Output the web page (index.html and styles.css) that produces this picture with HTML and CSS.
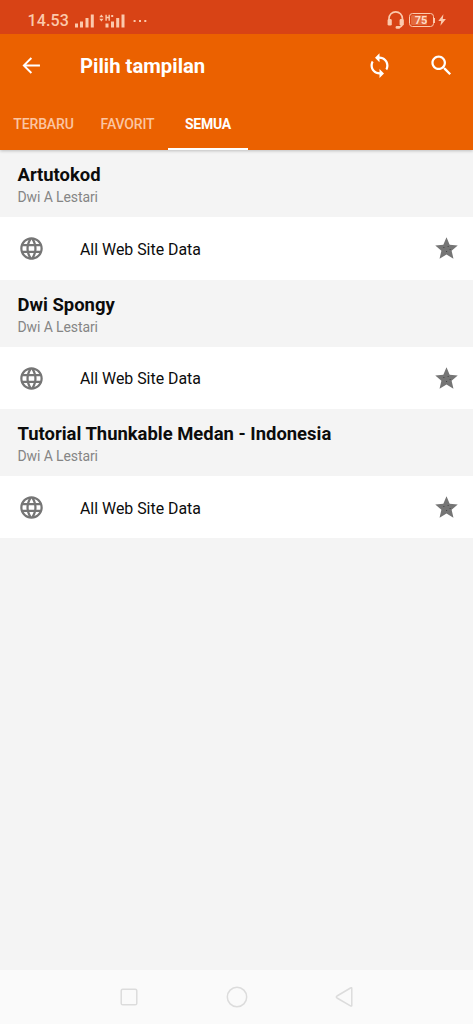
FILE: index.html
```html
<!DOCTYPE html>
<html lang="id">
<head>
<meta charset="utf-8">
<title>Pilih tampilan</title>
<link rel="stylesheet" href="styles.css">
</head>
<body>
<svg class="defs" width="0" height="0">
  <symbol id="globe" viewBox="0 0 24 24"><path d="M11.99 2C6.47 2 2 6.48 2 12s4.47 10 9.99 10C17.52 22 22 17.52 22 12S17.52 2 11.99 2zm6.93 6h-2.95c-.32-1.25-.78-2.45-1.38-3.56 1.84.63 3.37 1.91 4.33 3.56zM12 4.04c.83 1.2 1.48 2.53 1.91 3.96h-3.82c.43-1.43 1.08-2.76 1.91-3.96zM4.26 14C4.1 13.36 4 12.69 4 12s.1-1.36.26-2h3.38c-.08.66-.14 1.32-.14 2 0 .68.06 1.34.14 2H4.26zm.82 2h2.95c.32 1.25.78 2.45 1.38 3.56-1.84-.63-3.37-1.9-4.33-3.56zm2.95-8H5.08c.96-1.66 2.49-2.93 4.33-3.56C8.81 5.55 8.35 6.75 8.03 8zM12 19.96c-.83-1.2-1.48-2.53-1.91-3.96h3.82c-.43 1.43-1.08 2.76-1.91 3.96zM14.34 14H9.66c-.09-.66-.16-1.32-.16-2 0-.68.07-1.35.16-2h4.68c.09.65.16 1.32.16 2 0 .68-.07 1.34-.16 2zm.25 5.56c.6-1.11 1.06-2.31 1.38-3.56h2.95c-.96 1.65-2.49 2.93-4.33 3.56zM16.36 14c.08-.66.14-1.32.14-2 0-.68-.06-1.34-.14-2h3.38c.16.64.26 1.31.26 2s-.1 1.36-.26 2h-3.38z"/></symbol>
  <symbol id="star" viewBox="0 0 24 24"><path d="M12 17.27L18.18 21l-1.64-7.03L22 9.24l-7.19-.61L12 2 9.19 8.63 2 9.24l5.46 4.73L5.82 21z"/><path fill="#444" d="M9.2 10.6h.9v.9h-.9zM13 9.8h.9v.9H13zM14.8 12.4h.9v.9h-.9zM11.6 14.2h.9v.9h-.9z"/></symbol>
</svg>
<header class="top">
  <div class="status">
    <span class="clock">14.53</span>
    <svg class="signals" width="75" height="20" viewBox="0 0 75 20">
      <path d="M0 13.500h3v4H0zM5 11.500h3v6H5zM10.500 8h3v9.500h-3zM15.800 4.500h3v13h-3zM30.500 13.500h3v4h-3zM36 11.500h3v6h-3zM41.200 8h3v9.500h-3zM46.500 4.500h3v13h-3z"/>
      <path d="M24.200 7.200l2.200-2.700 2.200 2.700zM24.200 8.700l2.200 2.700 2.200-2.700zM30.400 4.800h1.400v2h1.700v-2h1.400v6h-1.400V8.200h-1.700v2.600h-1.400zM36.200 5h2v2h-2z"/>
      <path d="M58.600 10h2v2h-2zM64 10h2v2h-2zM69.300 10h2v2h-2z"/>
    </svg>
    <span class="status-right">
      <svg width="18" height="20" viewBox="0 0 18 20"><path fill="none" stroke="currentColor" stroke-width="1.700" d="M2 11V8.500a6.700 6.700 0 0 1 13.400 0V13c0 3-1.400 4.200-4.200 4.200"/><rect x=".6" y="9" width="4.200" height="6.600" rx="1.400"/><rect x="12.600" y="9" width="4.200" height="6.600" rx="1.400"/><rect x="8.600" y="16" width="4.600" height="2.800" rx="1.200"/></svg>
      <span class="battery"><span class="charge">75</span></span>
      <span class="terminal"></span>
      <svg class="bolt" width="8" height="12" viewBox="0 0 8 12"><path d="M5.400.3L.3 6.900h2.900L2.400 11.700 7.900 4.900H4.800z"/></svg>
    </span>
  </div>
  <div class="toolbar">
    <svg class="icon" viewBox="0 0 24 24"><path d="M19.500 11.100H7.300l5.200-5.200-1.200-1.300L4 12l7.300 7.400 1.200-1.300-5.200-5.200h12.200z"/></svg>
    <h1>Pilih tampilan</h1>
    <svg class="icon sync" viewBox="0 0 24 24"><path d="M12 4V1L8 5l4 4V6c3.310 0 6 2.690 6 6 0 1.010-.25 1.970-.7 2.800l1.460 1.460C19.540 15.030 20 13.570 20 12c0-4.420-3.580-8-8-8zm0 14c-3.310 0-6-2.690-6-6 0-1.010.25-1.970.7-2.800L5.240 7.740C4.460 8.970 4 10.430 4 12c0 4.420 3.580 8 8 8v3l4-4-4-4v3z"/></svg>
    <svg class="icon" viewBox="0 0 24 24"><path d="M15.500 14h-.79l-.28-.27C15.410 12.590 16 11.110 16 9.500 16 5.910 13.090 3 9.500 3S3 5.910 3 9.500 5.910 16 9.500 16c1.610 0 3.090-.59 4.230-1.570l.27.28v.79l5 4.990L20.490 19l-4.990-5zm-6 0C7.010 14 5 11.990 5 9.500S7.010 5 9.500 5 14 7.010 14 9.500 11.990 14 9.500 14z"/></svg>
  </div>
  <nav class="tabs">
    <span class="tab">TERBARU</span>
    <span class="tab">FAVORIT</span>
    <span class="tab active">SEMUA</span>
  </nav>
</header>
<main class="list">
  <section>
    <div class="group"><h2>Artutokod</h2><p>Dwi A Lestari</p></div>
    <div class="row"><svg class="globe"><use href="#globe"/></svg><span>All Web Site Data</span><svg class="star"><use href="#star"/></svg></div>
  </section>
  <section>
    <div class="group"><h2>Dwi Spongy</h2><p>Dwi A Lestari</p></div>
    <div class="row"><svg class="globe"><use href="#globe"/></svg><span>All Web Site Data</span><svg class="star"><use href="#star"/></svg></div>
  </section>
  <section>
    <div class="group"><h2>Tutorial Thunkable Medan - Indonesia</h2><p>Dwi A Lestari</p></div>
    <div class="row"><svg class="globe"><use href="#globe"/></svg><span>All Web Site Data</span><svg class="star"><use href="#star"/></svg></div>
  </section>
</main>
<footer class="navbar">
  <svg width="22" height="22" viewBox="0 0 22 22"><rect x="3.200" y="3.200" width="15.600" height="15.600" rx="1.600"/></svg>
  <svg width="22" height="22" viewBox="0 0 22 22"><circle cx="11" cy="11" r="9.700"/></svg>
  <svg width="22" height="22" viewBox="0 0 22 22"><path d="M17.800 2.600v16.600q0 1.400-1.300.6L3 12q-1.400-1 0-2L16.500 2q1.300-.8 1.300.6z"/></svg>
</footer>
</body>
</html>
```
FILE: styles.css
```css
* { box-sizing: border-box; }
body {
  margin: 0;
  height: 1024px;
  display: flex;
  flex-direction: column;
  overflow: hidden;
  background: #f4f4f4;
  color: #0c0c0c;
  font-family: Roboto, "Liberation Sans", sans-serif;
}
h1, h2, p { margin: 0; }
svg { flex: none; fill: currentColor; display: block; }
.defs { position: absolute; }
.top {
  height: 150.400px;
  flex: none;
  background: #eb6100;
  color: #fff;
  box-shadow: 0 1px 3px rgba(0, 0, 0, .22);
}
.status {
  height: 34px;
  padding: 6px 27px 0 27.500px;
  display: flex;
  align-items: center;
  background: #d84315;
  color: #fbc9ac;
}
.clock {
  width: 47.500px;
  padding-top: 2px;
  font-size: 16px;
  letter-spacing: .15px;
  line-height: 28px;
  font-weight: 500;
}
.signals { margin-top: -1px; }
.status-right { margin-left: auto; display: flex; align-items: center; }
.battery {
  width: 25px;
  height: 14px;
  margin-left: 4px;
  padding: 1px;
  border: 1.500px solid currentColor;
  border-radius: 3.500px;
}
.charge {
  display: block;
  height: 10px;
  border-radius: 1.500px;
  background: linear-gradient(90deg, #e2693c 75%, transparent 75%);
  color: #ffdcc8;
  font-size: 11px;
  line-height: 11px;
  font-weight: 700;
  text-align: center;
}
.terminal { width: 1.500px; height: 5px; background: currentColor; }
.bolt { margin-left: 3px; }
.toolbar {
  height: 62px;
  padding: 0 18px;
  display: flex;
  align-items: center;
}
.icon { width: 27px; height: 27px; }
.toolbar h1 { flex: 1; margin: 2px 0 0 35px; font-size: 20.300px; font-weight: 700; }
.sync { margin-right: 35px; }
.tabs { height: 54.400px; display: flex; font-size: 14px; font-weight: 500; }
.tab {
  width: 81px;
  padding-top: 3px;
  color: #fbc5a2;
  line-height: 50px;
  letter-spacing: -.15px;
  text-align: center;
  border-bottom: 2.500px solid transparent;
}
.tab:first-child { width: 87px; }
.tab.active { width: 80px; color: #fff; font-weight: 700; letter-spacing: -.25px; border-color: #fff; }
.list { flex: 1; }
.group { height: 66.900px; padding: 13px 17.500px 0; }
.group h2 { font-size: 18.430px; line-height: 23px; font-weight: 700; }
.group p { color: #858585; font-size: 14px; line-height: 22px; letter-spacing: -.1px; }
.row {
  height: 62.400px;
  padding: 0 13px 0 17px;
  display: flex;
  align-items: center;
  background: #fff;
  font-size: 15.900px;
}
.row span { flex: 1; margin-left: 36px; padding-top: 2px; }
.row svg { color: #757575; margin-top: 1px; }
.globe { width: 27px; height: 27px; margin-left: .5px; margin-right: -.5px; }
.star { width: 27px; height: 27px; }
.navbar {
  height: 54.500px;
  flex: none;
  padding-left: 117.500px;
  display: flex;
  align-items: center;
  gap: 86px;
  background: #fafafa;
}
.navbar svg { fill: none; stroke: #dcdcdc; stroke-width: 1.500; }
```
